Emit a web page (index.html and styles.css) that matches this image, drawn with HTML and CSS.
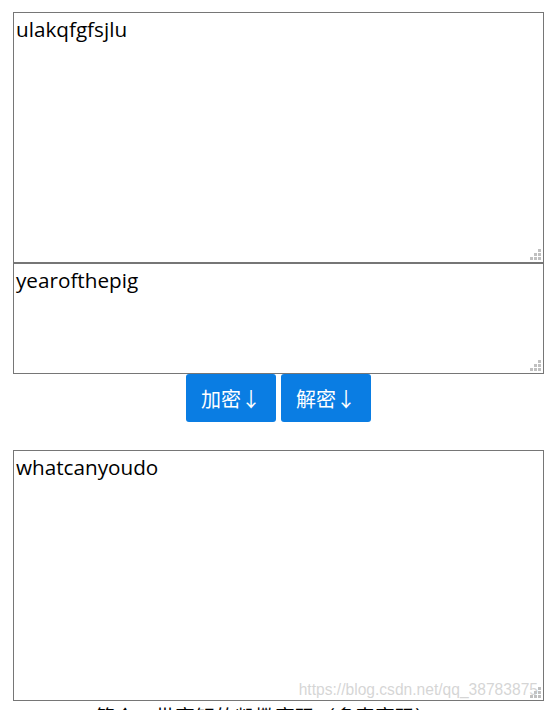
FILE: index.html
```html
<!DOCTYPE html>
<html lang="zh-CN">
<head>
  <meta charset="UTF-8" />
  <title>凯撒密码</title>
  <link rel="stylesheet" href="styles.css">
</head>
<body>
  <div class="page">
    <div class="box box-big">
      <textarea id="plain" class="field">ulakqfgfsjlu</textarea>
      <span class="grip"></span>
    </div>
    <div class="box box-key">
      <textarea id="key" class="field">yearofthepig</textarea>
      <span class="grip"></span>
    </div>
    <div class="actions">
      <button class="btn" id="enc">加密↓</button>
      <button class="btn" id="dec">解密↓</button>
    </div>
    <div class="box box-big box-out">
      <textarea id="cipher" class="field">whatcanyoudo</textarea>
      <span class="grip"></span>
      <span class="mark">https://blog.csdn.net/qq_38783875</span>
    </div>
    <p class="intro">简介：带密钥的凯撒密码（多表密码）</p>
  </div>
</body>
</html>
```

FILE: styles.css
```css
* { box-sizing: border-box; }
html, body { margin: 0; padding: 0; background: #fff; }
body {
  font-family: "Open Sans", "Noto Sans CJK SC", sans-serif;
  color: #000;
  overflow: hidden;
}
.page {
  width: 531px;
  margin: 12px 0 0 13px;
}
.box {
  position: relative;
}
.field {
  display: block;
  width: 100%;
  height: 100%;
  margin: 0;
  padding: 3px 2px 1px;
  border: 1px solid #767676;
  font-family: "Open Sans", "Noto Sans CJK SC", sans-serif;
  font-size: 20.7px;
  line-height: 27px;
  color: #000;
  resize: none;
  outline: none;
  background: #fff;
}
.box-big { height: 251px; }
.box-key { height: 111px; }
.grip {
  position: absolute;
  right: 3px;
  bottom: 3px;
  width: 11px;
  height: 11px;
  background:
    linear-gradient(#c0c0c0, #c0c0c0) 8px 0 / 3px 3px no-repeat,
    linear-gradient(#c0c0c0, #c0c0c0) 4px 4px / 3px 3px no-repeat,
    linear-gradient(#c0c0c0, #c0c0c0) 8px 4px / 3px 3px no-repeat,
    linear-gradient(#c0c0c0, #c0c0c0) 0 8px / 3px 3px no-repeat,
    linear-gradient(#c0c0c0, #c0c0c0) 4px 8px / 3px 3px no-repeat,
    linear-gradient(#c0c0c0, #c0c0c0) 8px 8px / 3px 3px no-repeat;
}
.actions {
  display: flex;
  justify-content: center;
  gap: 5px;
  margin-bottom: 28px;
}
.btn {
  width: 90px;
  height: 48px;
  padding: 0;
  border: none;
  border-radius: 3px;
  background: #0a7de3;
  color: #fff;
  font-family: "Noto Sans CJK SC", sans-serif;
  font-size: 20px;
  cursor: pointer;
}
.mark {
  position: absolute;
  right: 6px;
  bottom: 2px;
  font-family: "Liberation Sans", Arial, sans-serif;
  font-size: 15.6px;
  color: rgba(200, 200, 200, 0.75);
  white-space: nowrap;
}
.intro {
  margin: 2px 0 0 82px;
  font-family: "Noto Sans CJK SC", sans-serif;
  font-size: 20px;
  line-height: 28px;
}
```
